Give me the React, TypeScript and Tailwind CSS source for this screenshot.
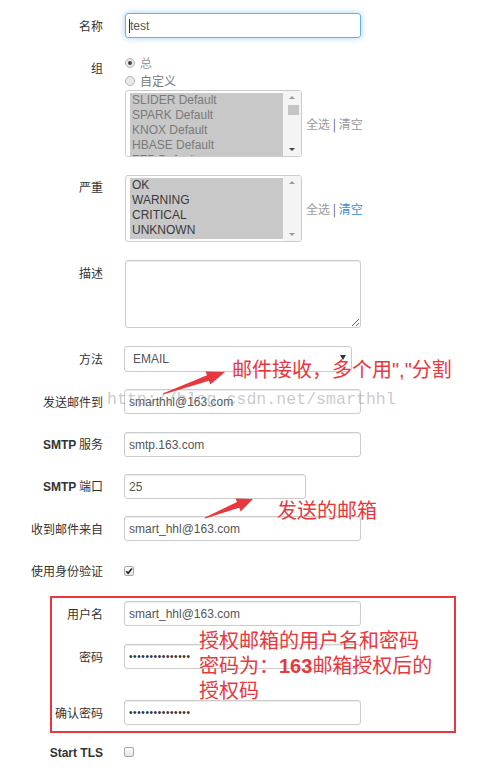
import React from "react";

const inputBase =
  "h-[25px] border border-[#cccccc] rounded-[3px] bg-white px-[4px] flex items-center text-[12px] text-[#555] shadow-[inset_0_1px_1px_rgba(0,0,0,0.075)]";

function Label({ children, w = "w-[103px]" }: { children: React.ReactNode; w?: string }) {
  return (
    <div
      className={`${w} shrink-0 text-right font-['Noto_Sans_CJK_SC',sans-serif] text-[12px] leading-[18px] text-[#333]`}
    >
      {children}
    </div>
  );
}

function Smtp({ text }: { text: string }) {
  return (
    <>
      <span className="font-['Liberation_Sans',sans-serif] font-bold">SMTP</span> {text}
    </>
  );
}

function ListBox({ items, dim, thumb }: { items: string[]; dim?: boolean; thumb?: boolean }) {
  return (
    <div className="w-[177px] h-[67px] border border-[#cccccc] rounded-[3px] bg-white flex overflow-hidden">
      <div className="pl-[4px] pt-[2px] h-full">
        <div
          className={`w-[153px] ${dim ? "h-full" : "h-[61px]"} bg-[#c8c8c8] pl-[2px] text-[12px] leading-[15px] ${
            dim ? "text-[#7a7a7a]" : "text-[#3a3a3a]"
          } overflow-hidden`}
        >
          {items.map((it) => (
            <div key={it} className="whitespace-nowrap">
              {it}
            </div>
          ))}
        </div>
      </div>
      <div className="flex-1 bg-[#f4f4f4] relative flex flex-col items-center justify-between py-[5px]">
        <div className="w-0 h-0 border-l-[3px] border-r-[3px] border-b-[3px] border-l-transparent border-r-transparent border-b-[#999]" />
        {thumb && <div className="absolute top-[14px] left-[5px] w-[11px] h-[10px] bg-[#c4c4c4]" />}
        <div
          className={`w-0 h-0 border-l-[3px] border-r-[3px] border-t-[3px] border-l-transparent border-r-transparent ${
            thumb ? "border-t-[#444]" : "border-t-[#999]"
          }`}
        />
      </div>
    </div>
  );
}

function SelectAll({ activeClear }: { activeClear?: boolean }) {
  return (
    <div className="ml-[4px] font-['Noto_Sans_CJK_SC',sans-serif] text-[12px] text-[#9a9a9a] whitespace-nowrap">
      全选 <span className="text-[#555]">|</span>{" "}
      <span className={activeClear ? "text-[#3d8fd1]" : "text-[#9a9a9a]"}>清空</span>
    </div>
  );
}

function Check({ checked }: { checked?: boolean }) {
  return (
    <div className="w-[10px] h-[10px] border border-[#a8a8a8] rounded-[2px] bg-[linear-gradient(#fdfdfd,#e6e6e6)] flex items-center justify-center">
      {checked && (
        <svg width="8" height="8" viewBox="0 0 8 8">
          <path d="M1.2 4.2 L3.1 6.2 L6.9 1.6" fill="none" stroke="#222" strokeWidth="1.6" />
        </svg>
      )}
    </div>
  );
}

function Radio({ on }: { on?: boolean }) {
  return (
    <div className="w-[10px] h-[10px] rounded-full border border-[#b5b5b5] bg-[#e9e9e9] flex items-center justify-center">
      {on && <div className="w-[4px] h-[4px] rounded-full bg-[#444]" />}
    </div>
  );
}

const dots = "•••••••••••••••";

export default function App() {
  return (
    <div className="relative w-[486px] h-[778px] bg-white overflow-hidden font-['Liberation_Sans',sans-serif]">
      <div className="flex flex-col pt-[13px]">
        {/* 名称 */}
        <div className="flex items-center">
          <Label>名称</Label>
          <div className="ml-[22px] w-[236px] h-[25px] border border-[#66afe9] rounded-[3px] px-[3px] flex items-center text-[12px] text-[#555] shadow-[0_0_6px_rgba(102,175,233,0.6)]">
            <span className="w-[1px] h-[14px] bg-[#333] mr-[0px]" />
            test
          </div>
        </div>

        {/* 组 */}
        <div className="flex items-start mt-[16px]">
          <div className="pt-[5px]">
            <Label>组</Label>
          </div>
          <div className="ml-[22px] flex flex-col">
            <div className="h-[18px] flex items-center gap-[5px] font-['Noto_Sans_CJK_SC',sans-serif] text-[12px] text-[#999]">
              <Radio on />
              总
            </div>
            <div className="h-[18px] flex items-center gap-[5px] font-['Noto_Sans_CJK_SC',sans-serif] text-[12px] text-[#777]">
              <Radio />
              自定义
            </div>
            <div className="flex items-center">
              <ListBox
                dim
                thumb
                items={["SLIDER Default", "SPARK Default", "KNOX Default", "HBASE Default", "ZEP Default"]}
              />
              <SelectAll />
            </div>
          </div>
        </div>

        {/* 严重 */}
        <div className="flex items-start mt-[18px]">
          <div className="pt-[3px]">
            <Label>严重</Label>
          </div>
          <div className="ml-[22px] flex items-center">
            <ListBox items={["OK", "WARNING", "CRITICAL", "UNKNOWN"]} />
            <SelectAll activeClear />
          </div>
        </div>

        {/* 描述 */}
        <div className="flex items-start mt-[18px]">
          <div className="pt-[4px]">
            <Label>描述</Label>
          </div>
          <textarea
            readOnly
            className="ml-[22px] w-[236px] h-[68px] border border-[#cccccc] rounded-[3px] bg-white shadow-[inset_0_1px_1px_rgba(0,0,0,0.075)] outline-none"
          />
        </div>

        {/* 方法 */}
        <div className="flex items-center mt-[18px]">
          <Label>方法</Label>
          <div className="ml-[21px] w-[228px] h-[26px] border border-[#cccccc] rounded-[3px] bg-white flex items-center justify-between pl-[8px] pr-[5px] text-[12px] text-[#555]">
            EMAIL
            <div className="w-0 h-0 mb-[4px] border-l-[3px] border-r-[3px] border-t-[5px] border-l-transparent border-r-transparent border-t-[#333]" />
          </div>
        </div>

        {/* 发送邮件到 */}
        <div className="flex items-center mt-[17px]">
          <Label>发送邮件到</Label>
          <div className={`ml-[21px] w-[237px] ${inputBase}`}>smarthhl@163.com</div>
        </div>

        {/* SMTP 服务 */}
        <div className="flex items-center mt-[18px]">
          <Label>
            <Smtp text="服务" />
          </Label>
          <div className={`ml-[21px] w-[237px] ${inputBase}`}>smtp.163.com</div>
        </div>

        {/* SMTP 端口 */}
        <div className="flex items-center mt-[17px]">
          <Label>
            <Smtp text="端口" />
          </Label>
          <div className={`ml-[21px] w-[182px] ${inputBase}`}>25</div>
        </div>

        {/* 收到邮件来自 */}
        <div className="flex items-center mt-[17px]">
          <Label>收到邮件来自</Label>
          <div className={`ml-[21px] w-[237px] ${inputBase}`}>smart_hhl@163.com</div>
        </div>

        {/* 使用身份验证 */}
        <div className="flex items-center h-[18px] mt-[21px]">
          <Label>使用身份验证</Label>
          <div className="ml-[21px]">
            <Check checked />
          </div>
        </div>

        {/* 授权 box */}
        <div className="ml-[50px] w-[406px] mt-[16px] border-2 border-[#e8383d] pt-[3px] pb-[6px] flex flex-col">
          <div className="flex items-center">
            <Label w="w-[51px]">用户名</Label>
            <div className={`ml-[21px] w-[237px] ${inputBase}`}>smart_hhl@163.com</div>
          </div>
          <div className="flex items-center mt-[18px]">
            <Label w="w-[51px]">密码</Label>
            <div className={`ml-[21px] w-[237px] ${inputBase}`}>
              <span className="text-[10px] tracking-[0.6px] text-[#333]">{dots}</span>
            </div>
          </div>
          <div className="flex items-center mt-[31px]">
            <Label w="w-[51px]">确认密码</Label>
            <div className={`ml-[21px] w-[237px] ${inputBase}`}>
              <span className="text-[10px] tracking-[0.6px] text-[#333]">{dots}</span>
            </div>
          </div>
        </div>

        {/* Start TLS */}
        <div className="flex items-center h-[18px] mt-[10px]">
          <Label>
            <span className="font-['Liberation_Sans',sans-serif] font-bold">Start TLS</span>
          </Label>
          <div className="ml-[21px]">
            <Check />
          </div>
        </div>
      </div>

      {/* annotations */}
      <div className="absolute left-[232px] top-[358px] whitespace-nowrap font-['Liberation_Sans','Noto_Sans_CJK_SC',sans-serif] text-[20px] leading-[25px] text-[#e8383d]">
        邮件接收，多个用&quot;,&quot;分割
      </div>
      <div className="absolute left-[277px] top-[497px] whitespace-nowrap font-['Noto_Sans_CJK_SC',sans-serif] text-[20px] leading-[25px] text-[#e8383d]">
        发送的邮箱
      </div>
      <div className="absolute left-[199px] top-[629px] font-['Liberation_Sans','Noto_Sans_CJK_SC',sans-serif] text-[20px] leading-[25px] text-[#e8383d]">
        <div>授权邮箱的用户名和密码</div>
        <div>
          密码为：<span className="font-bold">163</span>邮箱授权后的
        </div>
        <div>授权码</div>
      </div>

      <svg className="absolute left-0 top-0 pointer-events-none" width="486" height="778" viewBox="0 0 486 778">
        <polygon
          points="162.8,393.5 207.0,375.2 205.7,371.4 225,372 210.3,384.6 209.0,380.8 163.2,394.5"
          fill="#e8383d"
        />
        <polygon
          points="204.8,517.5 237.0,502.1 235.5,498.4 253,499 240.7,511.4 239.2,507.7 205.2,518.5"
          fill="#e8383d"
        />
      </svg>

      {/* watermark */}
      <div className="absolute left-[107px] top-[390px] whitespace-nowrap font-['Liberation_Mono',monospace] text-[16.6px] leading-[20px] text-[rgba(150,150,150,0.5)] pointer-events-none">
        http://blog.csdn.net/smarthhl
      </div>
    </div>
  );
}
